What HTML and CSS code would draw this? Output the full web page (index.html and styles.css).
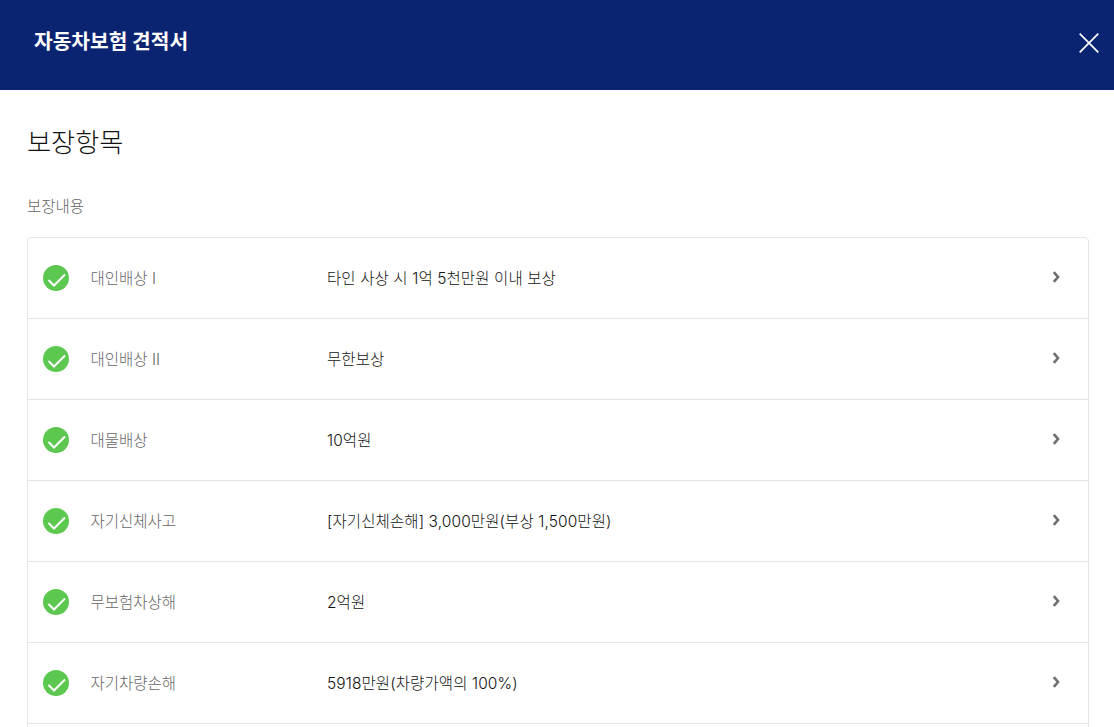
FILE: index.html
```html
<!DOCTYPE html>
<html lang="ko">
<head>
<meta charset="utf-8">
<title>자동차보험 견적서</title>
<link rel="stylesheet" href="styles.css">
</head>
<body>
<header class="header">
  <h1 class="header-title">자동차보험 견적서</h1>
  <button class="close" aria-label="닫기">
    <svg width="20" height="20" viewBox="0 0 20 20"><path d="M.7.7l18.6 18.6M19.3.7L.7 19.3" stroke="#fff" stroke-width="1.7" fill="none"/></svg>
  </button>
</header>
<main class="content">
  <h2 class="section-title">보장항목</h2>
  <p class="section-label">보장내용</p>
  <ul class="list">
    <li class="row">
      <svg class="check" width="26" height="26" viewBox="0 0 26 26"><circle cx="13" cy="13" r="13" fill="#5cc850"/><path d="M5.500 15l5.500 5.500 11-11" stroke="#fff" stroke-width="2" fill="none"/></svg>
      <span class="name">대인배상 I</span>
      <span class="value">타인 사상 시 1억 5천만원 이내 보상</span>
      <svg class="chev" width="9" height="12" viewBox="0 0 9 12"><path d="M1.800 1.200L6 6 1.800 10.800" stroke="#6e6e6e" stroke-width="2.600" fill="none"/></svg>
    </li>
    <li class="row">
      <svg class="check" width="26" height="26" viewBox="0 0 26 26"><circle cx="13" cy="13" r="13" fill="#5cc850"/><path d="M5.500 15l5.500 5.500 11-11" stroke="#fff" stroke-width="2" fill="none"/></svg>
      <span class="name">대인배상 II</span>
      <span class="value">무한보상</span>
      <svg class="chev" width="9" height="12" viewBox="0 0 9 12"><path d="M1.800 1.200L6 6 1.800 10.800" stroke="#6e6e6e" stroke-width="2.600" fill="none"/></svg>
    </li>
    <li class="row">
      <svg class="check" width="26" height="26" viewBox="0 0 26 26"><circle cx="13" cy="13" r="13" fill="#5cc850"/><path d="M5.500 15l5.500 5.500 11-11" stroke="#fff" stroke-width="2" fill="none"/></svg>
      <span class="name">대물배상</span>
      <span class="value">10억원</span>
      <svg class="chev" width="9" height="12" viewBox="0 0 9 12"><path d="M1.800 1.200L6 6 1.800 10.800" stroke="#6e6e6e" stroke-width="2.600" fill="none"/></svg>
    </li>
    <li class="row">
      <svg class="check" width="26" height="26" viewBox="0 0 26 26"><circle cx="13" cy="13" r="13" fill="#5cc850"/><path d="M5.500 15l5.500 5.500 11-11" stroke="#fff" stroke-width="2" fill="none"/></svg>
      <span class="name">자기신체사고</span>
      <span class="value">[자기신체손해] 3,000만원(부상 1,500만원)</span>
      <svg class="chev" width="9" height="12" viewBox="0 0 9 12"><path d="M1.800 1.200L6 6 1.800 10.800" stroke="#6e6e6e" stroke-width="2.600" fill="none"/></svg>
    </li>
    <li class="row">
      <svg class="check" width="26" height="26" viewBox="0 0 26 26"><circle cx="13" cy="13" r="13" fill="#5cc850"/><path d="M5.500 15l5.500 5.500 11-11" stroke="#fff" stroke-width="2" fill="none"/></svg>
      <span class="name">무보험차상해</span>
      <span class="value">2억원</span>
      <svg class="chev" width="9" height="12" viewBox="0 0 9 12"><path d="M1.800 1.200L6 6 1.800 10.800" stroke="#6e6e6e" stroke-width="2.600" fill="none"/></svg>
    </li>
    <li class="row">
      <svg class="check" width="26" height="26" viewBox="0 0 26 26"><circle cx="13" cy="13" r="13" fill="#5cc850"/><path d="M5.500 15l5.500 5.500 11-11" stroke="#fff" stroke-width="2" fill="none"/></svg>
      <span class="name">자기차량손해</span>
      <span class="value">5918만원(차량가액의 100%)</span>
      <svg class="chev" width="9" height="12" viewBox="0 0 9 12"><path d="M1.800 1.200L6 6 1.800 10.800" stroke="#6e6e6e" stroke-width="2.600" fill="none"/></svg>
    </li>
    <li class="row"></li>
  </ul>
</main>
</body>
</html>
```

FILE: styles.css
```css
* { box-sizing: border-box; }
html, body { margin: 0; height: 100%; overflow: hidden; background: #fff; }
body { font-family: "Inter", "Noto Sans CJK KR", sans-serif; color: #222; }
.header {
  height: 90px;
  background: #0a2472;
  display: flex;
  align-items: center;
  justify-content: space-between;
  padding: 0 15px 0 34px;
}
.header-title { margin: 0 0 6px; font-size: 20.300px; font-weight: 700; color: #fff; line-height: 30px; }
.close { width: 20px; height: 20px; padding: 0; border: 0; background: none; display: flex; margin-top: -4px; }
.content { padding: 34px 25px 0 27px; }
.section-title { margin: 0; font-size: 26.200px; font-weight: 300; line-height: 38px; color: #111; }
.section-label { margin: 34px 0 0; font-size: 15.500px; font-weight: 300; line-height: 22px; color: #666; }
.list { list-style: none; margin: 19px 0 0; padding: 0; border: 1px solid #e5e5e5; border-radius: 4px; }
.row {
  height: 81px;
  display: flex;
  align-items: center;
  padding: 0 27px 0 15px;
  border-bottom: 1px solid #e5e5e5;
  font-size: 15.500px;
  font-weight: 300;
}
.check { flex: none; }
.name { flex: none; width: 236.500px; margin-left: 21.500px; margin-top: -3px; color: #666; }
.value { flex: 1; color: #111; margin-top: -3px; letter-spacing: .1px; }
.chev { flex: none; margin-top: -2px; }
```
